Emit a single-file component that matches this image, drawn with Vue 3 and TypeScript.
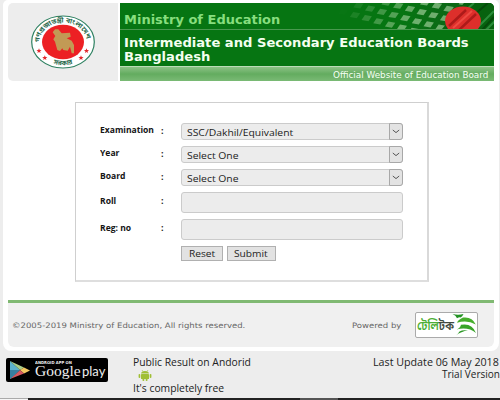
<script setup lang="ts">
interface Field {
  label: string
  kind: 'select' | 'text'
  value: string
}

const fields: Field[] = [
  { label: 'Examination', kind: 'select', value: 'SSC/Dakhil/Equivalent' },
  { label: 'Year', kind: 'select', value: 'Select One' },
  { label: 'Board', kind: 'select', value: 'Select One' },
  { label: 'Roll', kind: 'text', value: '' },
  { label: 'Reg: no', kind: 'text', value: '' },
]

interface Tile {
  x: number
  y: number
  o: number
}

const tiles: Tile[] = []
for (let row = 0; row < 5; row++) {
  for (let col = 0; col < 11; col++) {
    const x = 8 + col * 11.7 - (row % 3) * 3.5
    const y = -15 + row * 10.5 + (x - 83) * 0.27
    tiles.push({ x, y, o: Math.max(0, Math.min(0.58, (x + y * 0.6 - 6) / 125)) })
  }
}
</script>

<template>
  <div class="page">
    <main class="sheet">
      <header class="header">
        <div class="seal">
          <svg width="66" height="56" viewBox="0 0 66 56">
            <defs>
              <path id="arcTop" d="M9.3 28.5A23.7 20 0 0 1 56.7 28.5" />
              <path id="arcBottom" d="M6 28A27 23.3 0 0 0 60 28" />
            </defs>
            <ellipse cx="33" cy="28" rx="31.3" ry="26" fill="#fff" stroke="#2d8060" stroke-width="1.2" />
            <ellipse cx="33" cy="28" rx="21" ry="17.3" fill="#ec2024" />
            <path
              d="M25 15.3H28.3L31.7 19.3 40 18.7 40.7 22.7 36.7 24.3 41.7 26.7 44 31V39.3H41.7L40 32.7 37.7 36.7 33.3 36 32.3 34.3 30 37 27.3 36 25 27.7 23.3 25.3 25.3 22 22.7 18.3z"
              fill="#c29a55"
            />
            <g class="seal-text">
              <text><textPath href="#arcTop" textLength="65" lengthAdjust="spacingAndGlyphs">গণপ্রজাতন্ত্রী বাংলাদেশ</textPath></text>
              <text><textPath href="#arcBottom" startOffset="50%" text-anchor="middle">সরকার</textPath></text>
            </g>
            <g fill="#e3292d">
              <path
                v-for="p in ['9 34.2', '14.8 41.2', '51 41.2', '56.5 34.2']"
                :key="p"
                :d="`M${p}l.7 1.7 1.9.1-1.5 1.2.5 1.9-1.6-1-1.6 1 .5-1.9-1.5-1.2 1.9-.1z`"
              />
            </g>
          </svg>
        </div>
        <div class="banner">
          <div class="ministry">
            <span class="t ministry-text">Ministry of Education</span>
            <svg class="flag" width="160" height="26" viewBox="0 0 160 26">
              <defs>
                <linearGradient id="fold" x1="0" y1="0" x2="1" y2="0">
                  <stop offset="0" stop-color="#067512" />
                  <stop offset=".4" stop-color="#0b6a16" />
                  <stop offset="1" stop-color="#07600f" />
                </linearGradient>
              </defs>
              <path d="M70 0H160V26H70z" fill="url(#fold)" />
              <path
                v-for="(t, i) in tiles"
                :key="i"
                :d="`M${t.x + 3} ${t.y}l7 1.2-3.4 5-7-1.2z`"
                fill="#b9deb0"
                :fill-opacity="t.o"
              />
              <path d="M108 26L130 0H160V26z" fill="#07620f" />
              <path d="M132 7L140 0M144 24L160 8M152 27L162 17" stroke="#2a8d3a" stroke-width="2" />
              <path d="M140 12L154 0M148 27L160 14" stroke="#054a0b" stroke-width="2" />
              <ellipse cx="129" cy="18" rx="18" ry="14.5" fill="#dd2f2b" />
              <path d="M115 23L132 7M124 28L142 11" stroke="#ad1a19" stroke-width="2.5" />
              <path d="M119 25L138 8" stroke="#ee4a42" stroke-width="2" />
            </svg>
          </div>
          <h1 class="board">
            <span class="t board-line">Intermediate and Secondary Education Boards</span>
            <span class="t board-line">Bangladesh</span>
          </h1>
          <div class="official"><span class="t official-text">Official Website of Education Board</span></div>
        </div>
      </header>

      <form class="form" @submit.prevent>
        <div v-for="f in fields" :key="f.label" class="row" :class="f.kind">
          <span class="label"><span class="t label-text">{{ f.label }}</span></span>
          <span class="colon">:</span>
          <div class="control">
            <span class="t value">{{ f.value }}</span>
            <span v-if="f.kind === 'select'" class="arrow">
              <svg width="8" height="5" viewBox="0 0 8 5">
                <path d="M.8 1L4 3.6 7.2 1" fill="none" stroke="#555" stroke-width="1" />
              </svg>
            </span>
          </div>
        </div>
        <div class="actions">
          <button type="reset" class="reset"><span class="t">Reset</span></button>
          <button type="submit" class="submit"><span class="t">Submit</span></button>
        </div>
      </form>

      <footer class="footer">
        <span class="copyright"><span class="t foot-text">©2005-2019 Ministry of Education, All rights reserved.</span></span>
        <span class="powered"><span class="t foot-text">Powered by</span></span>
        <div class="teletalk">
          <svg width="61" height="24" viewBox="0 0 61 24">
            <text class="tt" x="1" y="17" textLength="37" lengthAdjust="spacingAndGlyphs"><tspan fill="#4caf35">টেলি</tspan><tspan fill="#3e4a40">টক</tspan></text>
            <path d="M36.5 1Q42 2.4 47.5 1Q46.5 3.4 44.7 4.4Q43 4 41 5.3Q40 2.5 36.5 1z" fill="#249225" />
            <path d="M41 9.8Q42 7 47 4.6Q56 3.4 59.8 11.4Q51 6.6 41 9.8z" fill="#46ae2c" />
            <path d="M40.5 16.5Q44 15.4 45 11.8Q56 9.6 60 20Q52 13.4 40.5 16.5z" fill="#38a428" />
            <path d="M40 22.5Q42 21 43.5 18.6Q47 16.4 52 17.6Q45 18.4 40 22.5z" fill="#2b9825" />
          </svg>
        </div>
      </footer>
    </main>

    <section class="bottom">
      <div class="play">
        <svg width="26" height="22" viewBox="0 0 26 22">
          <path d="M4 2L14 11 4 20z" fill="#5cb3cc" />
          <path d="M4 2L18 8.5 14 11z" fill="#a9cf89" />
          <path d="M18 8.5L24 11.5 18 14.5 14 11z" fill="#f3c861" />
          <path d="M4 20L14 11 18 14.5z" fill="#d65a61" />
          <path d="M4 11L14 11 4 20z" fill="#387fa0" />
        </svg>
        <div class="play-words">
          <span class="t play-small">ANDROID APP ON</span>
          <span class="play-big"><span class="google">Google</span><span class="t playtxt">play</span></span>
        </div>
      </div>
      <div class="result">
        <span class="t public">Public Result on Andorid</span>
        <svg class="droid" width="14" height="11" viewBox="0 0 14 11">
          <g fill="#a0bf35">
            <path d="M3 3.5Q3.4 1 7 1T11 3.5z" />
            <rect x="3" y="4" width="8" height="5" rx=".6" />
            <rect x="0.6" y="4" width="1.7" height="4" rx=".8" />
            <rect x="11.7" y="4" width="1.7" height="4" rx=".8" />
            <rect x="4.5" y="8" width="1.8" height="3" rx=".8" />
            <rect x="7.7" y="8" width="1.8" height="3" rx=".8" />
          </g>
          <path d="M4 0l1 1.6M10 0L9 1.6" stroke="#a0bf35" stroke-width=".6" />
        </svg>
        <span class="t public">It's completely free</span>
      </div>
      <div class="update">
        <span class="t last">Last Update 06 May 2018</span>
        <span class="t trial">Trial Version</span>
      </div>
    </section>
    <div class="taskbar"><i class="task-light"></i><i class="task-dark"></i><i class="task-active"></i><i class="task-dark rest"></i></div>
  </div>
</template>

<style>
body {
  margin: 0;
  overflow: hidden;
}
</style>

<style scoped>
.page {
  width: 500px;
  height: 400px;
  background: #ededed;
  display: flex;
  flex-direction: column;
  overflow: hidden;
  font-family: 'Open Sans', 'Noto Sans', sans-serif;
  color: #222;
}
.page * {
  box-sizing: border-box;
}
.t {
  display: block;
  width: max-content;
  white-space: nowrap;
  transform-origin: 0 50%;
}
.sheet {
  height: 351px;
  flex: none;
  margin: 0 1px 0 3px;
  padding: 3px 5px 4px;
  background: #fff;
  border-radius: 5px 5px 8px 8px;
  display: flex;
  flex-direction: column;
}
.header {
  height: 78px;
  flex: none;
  width: 486px;
  display: flex;
  gap: 2px;
}
.seal {
  width: 110px;
  background: #ededed;
  border-radius: 5px 0 0 5px;
  padding: 11px 0 0 22px;
}
.seal-text {
  font: 700 6.8px 'Noto Sans Bengali', 'Noto Sans', sans-serif;
  fill: #2d6c50;
}
.banner {
  flex: 1;
  min-width: 0;
  background: #067512;
  border-radius: 0 5px 0 0;
  overflow: hidden;
  font-family: 'DejaVu Sans', Verdana, sans-serif;
}
.ministry {
  height: 27px;
  border-bottom: 1px solid #49994f;
  display: flex;
  justify-content: space-between;
  padding-left: 4px;
}
.ministry-text {
  font-weight: 700;
  font-size: 11.5px;
  line-height: 34px;
  color: #87de7e;
  transform: scaleX(1.13);
}
.flag {
  flex: none;
}
.board {
  margin: 0;
  height: 36px;
  padding: 6px 0 0 4px;
  color: #f4fff0;
  font-size: 11.5px;
  line-height: 14px;
}
.board-line {
  transform: scaleX(1.14);
}
.official {
  height: 15px;
  border-top: 1px solid #bcdcb8;
  background: linear-gradient(#8cc286, #63ac5f 50%, #7aba75);
  color: #f6fff4;
  font-size: 9px;
  line-height: 16px;
  padding-left: 213px;
}
.official-text {
  transform: scaleX(0.98);
}
.form {
  width: 354px;
  height: 180px;
  margin: 21px 0 0 67px;
  border: 1px solid #cfcfcf;
  border-right: 2px solid #d9d9d9;
  border-bottom: 2px solid #dedede;
  padding: 20px 0 0 24px;
  display: flex;
  flex-direction: column;
  gap: 6px;
}
.row {
  display: flex;
  height: 17px;
}
.row.text {
  height: 21px;
}
.label {
  width: 61px;
  font-weight: 700;
  font-size: 9px;
  line-height: 14px;
  color: #151515;
}
.label-text {
  transform: scaleX(0.95);
}
.row.text .label,
.row.text .colon {
  line-height: 18px;
}
.colon {
  width: 20px;
  font-weight: 700;
  font-size: 9px;
  line-height: 15px;
}
.control {
  width: 222px;
  background: #ececec;
  border: 1px solid #cbcbcb;
  border-radius: 3px;
  display: flex;
  justify-content: space-between;
  padding-left: 5px;
}
.value {
  font-size: 9.5px;
  line-height: 17px;
  transform: scaleX(1.09);
}
.arrow {
  width: 14px;
  margin: -1px;
  border: 1px solid #a8a8a8;
  border-radius: 0 3px 3px 0;
  background: #e3e3e3;
  display: flex;
  align-items: center;
  justify-content: center;
}
.actions {
  display: flex;
  gap: 4px;
  padding-left: 81px;
}
.actions button {
  height: 15px;
  padding: 0 0 0 7px;
  border: 1px solid #b0b0b0;
  background: #e2e2e2;
  font: 9.5px/13px 'Open Sans', 'Noto Sans', sans-serif;
  color: #222;
  text-align: left;
}
.actions .t {
  transform: scaleX(1.07);
}
.actions .reset {
  width: 42px;
}
.actions .submit {
  width: 49px;
  padding-left: 6px;
}
.footer {
  margin-top: 18px;
  width: 486px;
  height: 47px;
  border-top: 3px solid #80b972;
  border-radius: 0 0 6px 6px;
  background: #f0f0f0;
  display: flex;
  align-items: center;
  font-family: 'DejaVu Sans', Verdana, sans-serif;
  font-size: 7.5px;
  color: #666;
  padding-left: 4px;
}
.foot-text {
  transform: scaleX(1.135);
}
.copyright {
  width: 340px;
}
.powered {
  width: 63px;
}
.teletalk {
  width: 63px;
  height: 26px;
  border: 1px solid #aaa;
  border-radius: 2px;
  background: #fff;
}
.teletalk svg {
  display: block;
}
.tt {
  font: 600 12px 'Noto Sans Bengali', 'Noto Sans', sans-serif;
}
.bottom {
  flex: 1;
  min-height: 0;
  display: flex;
  padding: 5px 0 0 6px;
  font-size: 10px;
  line-height: 13px;
}
.play {
  width: 102px;
  height: 24px;
  margin-top: 2px;
  background: #000;
  border-radius: 2px;
  color: #eee;
  display: flex;
  align-items: center;
}
.play-words {
  padding-left: 3px;
}
.play-small {
  font: 700 4px/5px 'DejaVu Sans', sans-serif;
  transform: scaleX(0.93);
}
.play-big {
  display: flex;
  height: 15px;
  font-family: Lato, sans-serif;
  font-size: 13px;
  line-height: 13px;
}
.google {
  width: 47px;
  font-family: 'Liberation Serif', serif;
  font-size: 15.5px;
  line-height: 12px;
}
.result {
  width: 240px;
  padding-left: 25px;
}
.public {
  transform: scaleX(1.033);
}
.droid {
  display: block;
  margin: 1px 0 1px 5px;
}
.last {
  margin-left: 25px;
  transform: scaleX(1.07);
}
.trial {
  margin-left: 94px;
  line-height: 10px;
}
.taskbar {
  height: 2px;
  flex: none;
  display: flex;
}
.task-light {
  width: 28px;
  background: #f6f6f6;
  border-top: 1px solid #aaa;
}
.task-dark {
  width: 272px;
  background: #222;
}
.task-active {
  width: 38px;
  background: #555;
}
.rest {
  flex: 1;
}
</style>
